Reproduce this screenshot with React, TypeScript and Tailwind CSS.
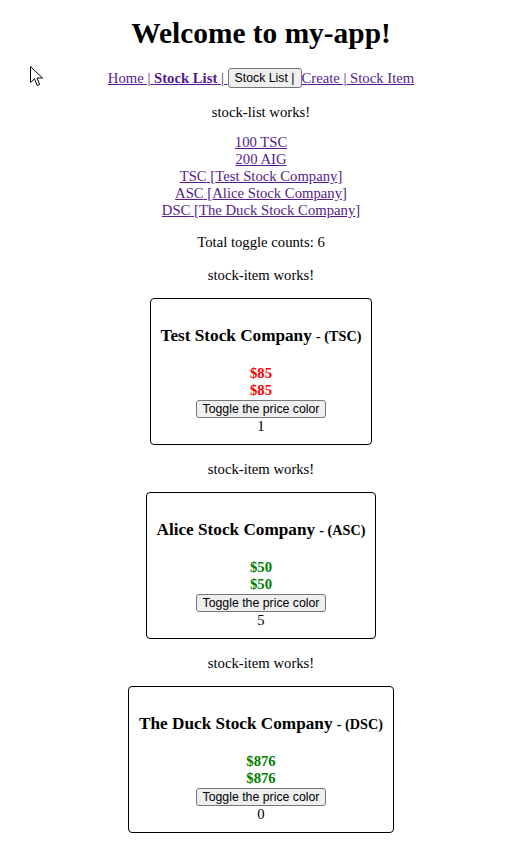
import { useState } from "react";

type Stock = {
	name: string;
	code: string;
	price: number;
	favorite: boolean;
	toggles: number;
};

const initialStocks: Stock[] = [
	{ name: "Test Stock Company", code: "TSC", price: 85, favorite: false, toggles: 1 },
	{ name: "Alice Stock Company", code: "ASC", price: 50, favorite: true, toggles: 5 },
	{ name: "The Duck Stock Company", code: "DSC", price: 876, favorite: true, toggles: 0 },
];

const linkClass = "text-[#551a8b] underline";
const buttonClass =
	"font-['Liberation_Sans',Arial,sans-serif] text-[12.3px] leading-[14px] bg-[#efefef] border border-[#767676] rounded-[3px] px-[6px] text-black";

const Cursor = () => (
	<svg
		className="absolute left-[30px] top-[66px]"
		width="14"
		height="21"
		viewBox="0 0 14 21"
	>
		<path
			d="M0.5 0.5 L0.5 16.5 L4.5 12.8 L7.2 19.5 L9.6 18.5 L7 12 L12.5 12 Z"
			fill="white"
			stroke="black"
			strokeWidth="1"
			strokeLinejoin="round"
		/>
	</svg>
);

const StockItem = ({
	stock,
	onToggle,
}: {
	stock: Stock;
	onToggle: () => void;
}) => {
	const color = stock.favorite ? "text-[#008000]" : "text-[#ff0000]";
	return (
		<>
			<p className="mt-[15px] leading-[18px]">stock-item works!</p>
			<div className="mt-[14px] inline-block border border-black rounded-[4px] px-[10px] pt-[27px] pb-[9px]">
				<h3 className="font-bold text-[17.2px] leading-[20px]">
					{stock.name} <span className="text-[14.2px]">- ({stock.code})</span>
				</h3>
				<div className={`mt-[19px] font-bold leading-[17px] ${color}`}>
					<div>${stock.price}</div>
					<div>${stock.price}</div>
				</div>
				<button
					type="button"
					className={`${buttonClass} block mx-auto mt-[1px] h-[18px]`}
					onClick={onToggle}
				>
					Toggle the price color
				</button>
				<div className="leading-[17px]">{stock.toggles}</div>
			</div>
		</>
	);
};

export default function App() {
	const [stocks, setStocks] = useState<Stock[]>(initialStocks);

	const toggle = (i: number) => {
		setStocks((prev) =>
			prev.map((s, idx) =>
				idx === i ? { ...s, favorite: !s.favorite, toggles: s.toggles + 1 } : s,
			),
		);
	};

	const total = stocks.reduce((sum, s) => sum + s.toggles, 0);

	return (
		<div className="relative min-h-[866px] bg-white text-black text-center text-[14.7px] font-['Liberation_Serif','Times_New_Roman',serif] pl-[9px] pb-[20px]">
			<Cursor />
			<h1 className="pt-[16px] text-[29.4px] leading-[34px] font-bold">
				Welcome to my-app!
			</h1>

			<nav className="mt-[18px] h-[20px] flex justify-center items-center leading-[17px]">
				<a href="#" className={linkClass}>Home |</a>
				<a href="#" className={linkClass}>
					&nbsp;<b>Stock List</b> |
				</a>
				<a href="#" className={linkClass}>&nbsp;</a>
				<button type="button" className={`${buttonClass} h-[20px] px-[6px]`}>
					Stock List |
				</button>
				<a href="#" className={linkClass}>Create |</a>
				<a href="#" className={linkClass}>&nbsp;Stock Item</a>
			</nav>

			<p className="mt-[16px] leading-[17px]">stock-list works!</p>

			<div className="mt-[13px] flex flex-col items-center leading-[17px]">
				<a href="#" className={linkClass}>100 TSC</a>
				<a href="#" className={linkClass}>200 AIG</a>
				{stocks.map((s) => (
					<a key={s.code} href="#" className={linkClass}>
						{s.code} [{s.name}]
					</a>
				))}
			</div>

			<p className="mt-[15px] leading-[17px]">Total toggle counts: {total}</p>

			{stocks.map((s, i) => (
				<StockItem key={s.code} stock={s} onToggle={() => toggle(i)} />
			))}
		</div>
	);
}
